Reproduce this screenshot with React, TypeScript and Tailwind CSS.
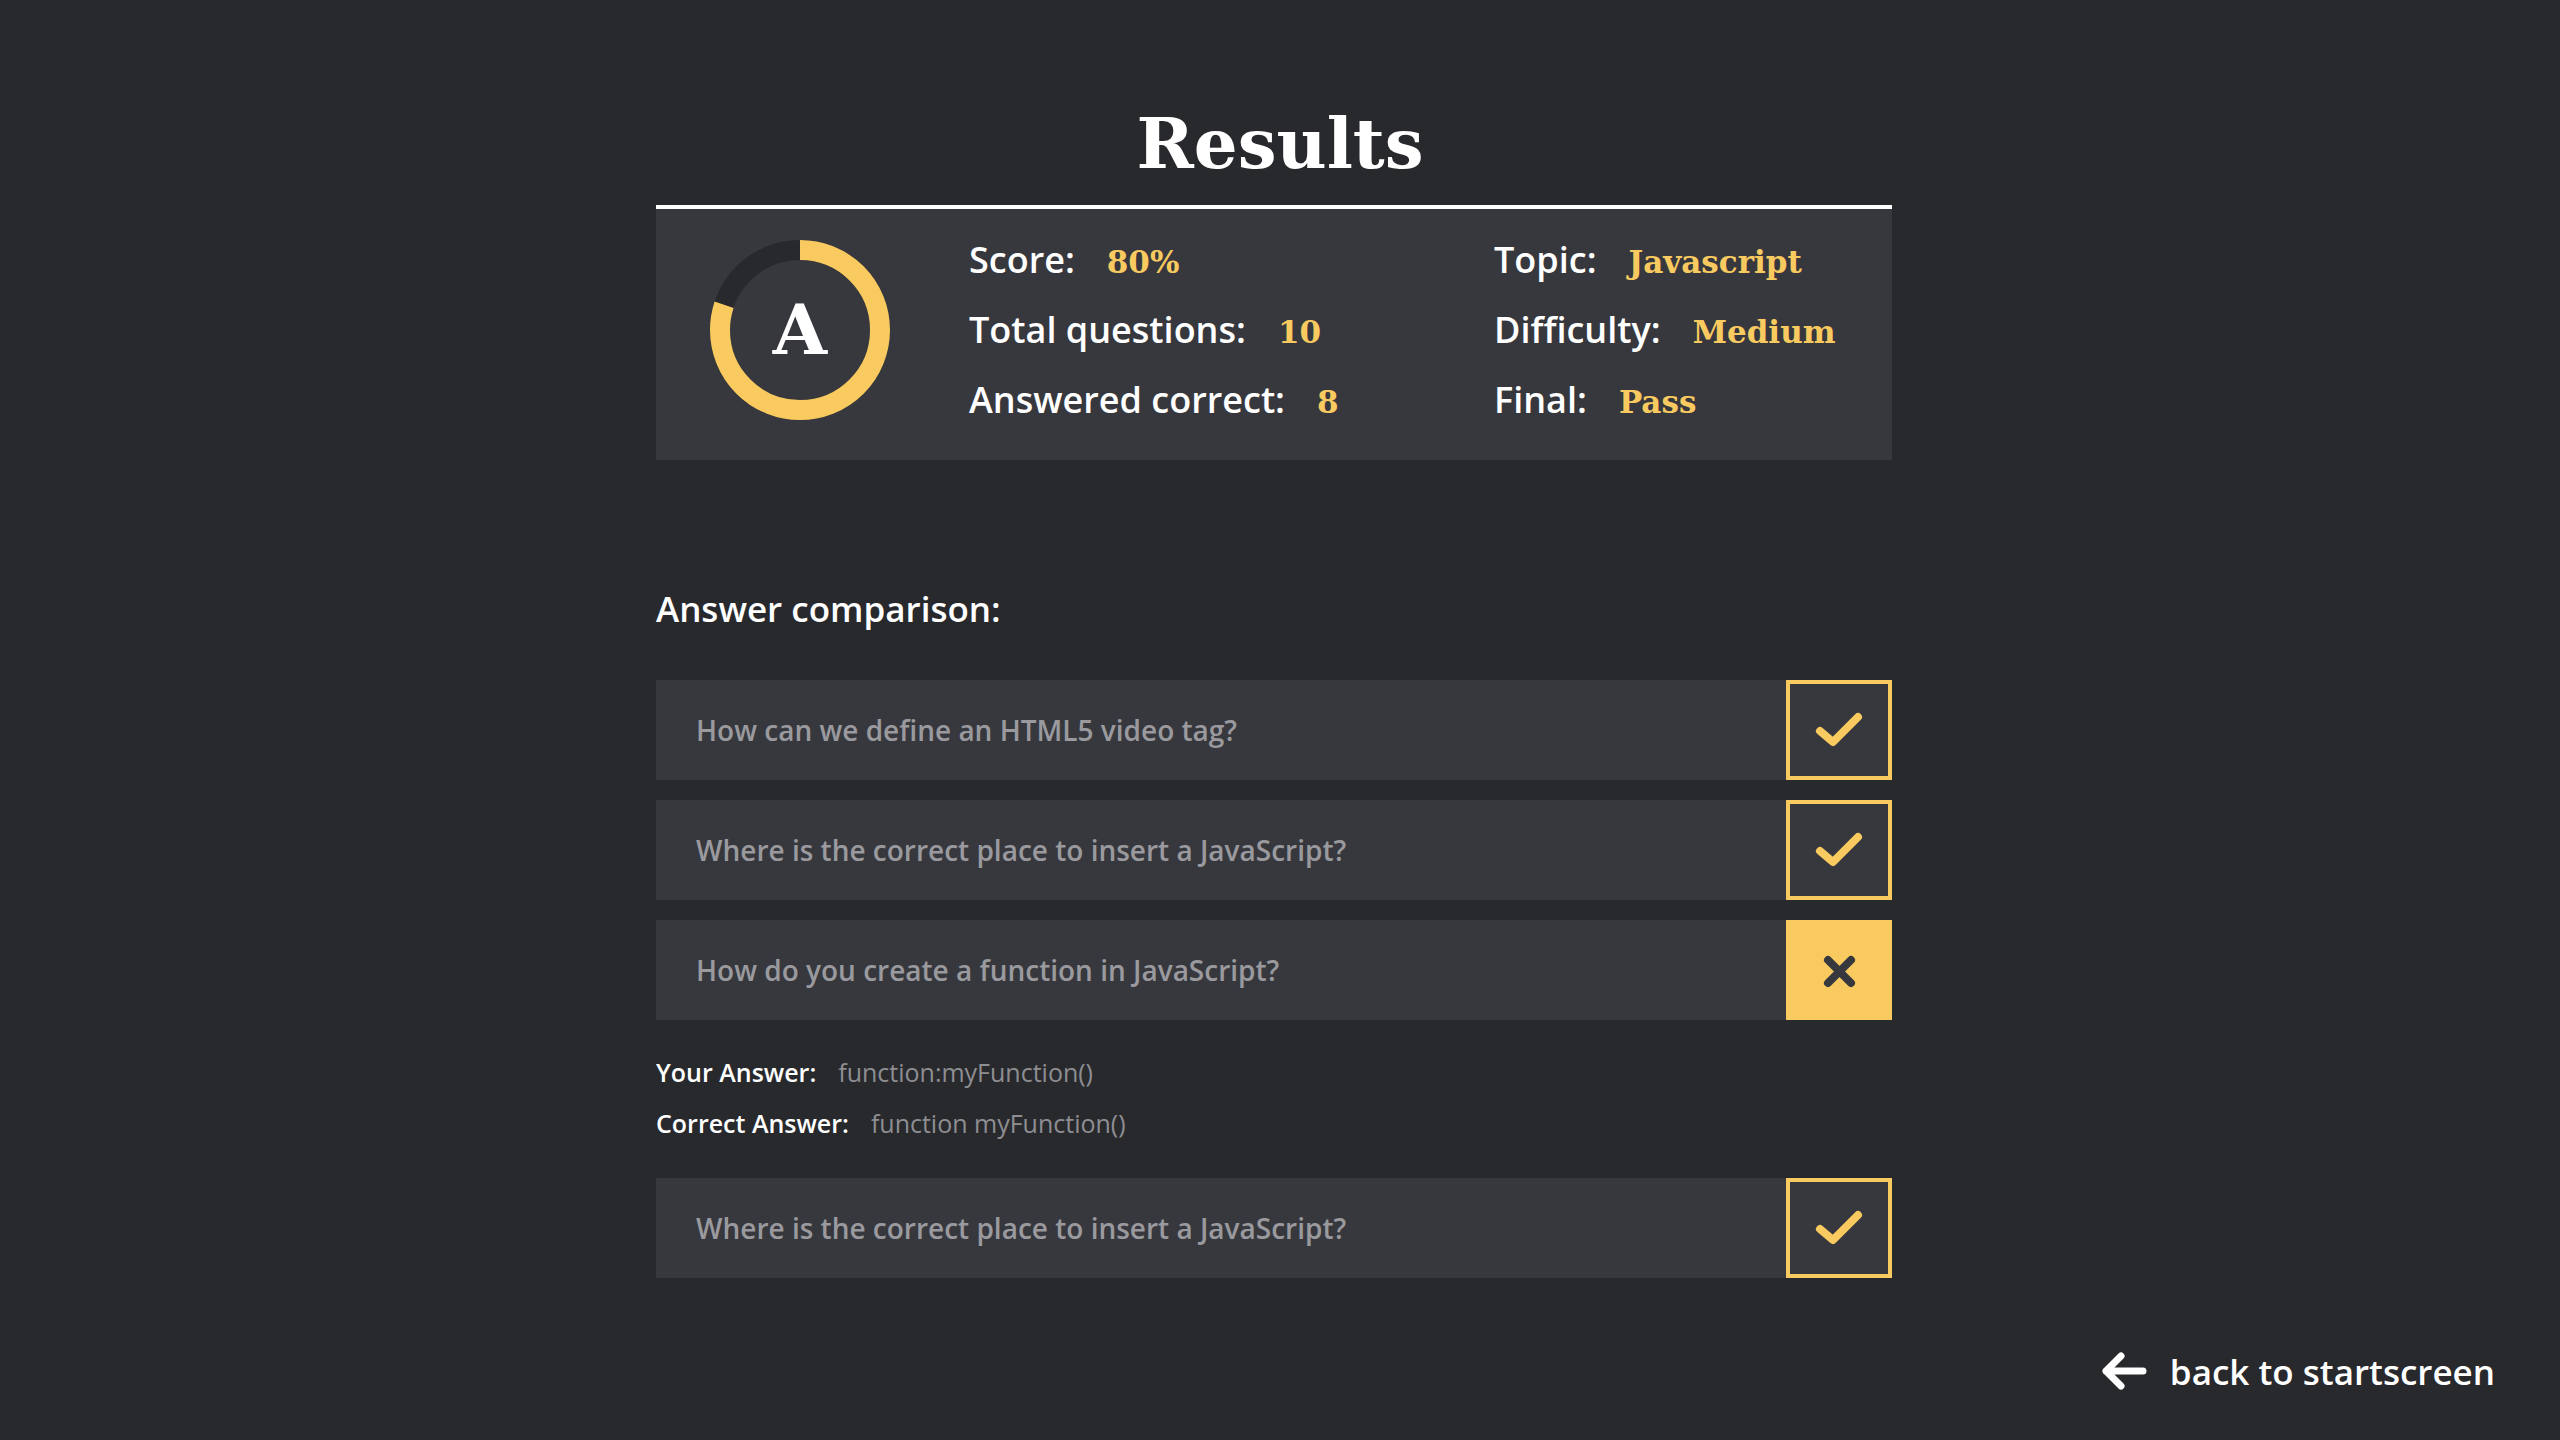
import React from 'react';

type Answer = {
  question: string;
  correct: boolean;
  yourAnswer?: string;
  rightAnswer?: string;
};

const answers: Answer[] = [
  { question: 'How can we define an HTML5 video tag?', correct: true },
  { question: 'Where is the correct place to insert a JavaScript?', correct: true },
  {
    question: 'How do you create a function in JavaScript?',
    correct: false,
    yourAnswer: 'function:myFunction()',
    rightAnswer: 'function myFunction()',
  },
  { question: 'Where is the correct place to insert a JavaScript?', correct: true },
];

const sans = { fontFamily: '"Open Sans", "Noto Sans", sans-serif' };
const serif = { fontFamily: '"DejaVu Serif", "Liberation Serif", serif' };

function ScoreRing({ percent, grade }: { percent: number; grade: string }) {
  const r = 80;
  const c = 2 * Math.PI * r;
  return (
    <div className="relative w-[180px] h-[180px] shrink-0">
      <svg width="180" height="180" viewBox="0 0 180 180" className="-rotate-90">
        <circle cx="90" cy="90" r={r} fill="none" stroke="#28292d" strokeWidth="20" />
        <circle
          cx="90"
          cy="90"
          r={r}
          fill="none"
          stroke="#f8ca5f"
          strokeWidth="20"
          strokeDasharray={`${(c * percent) / 100} ${c}`}
        />
      </svg>
      <div
        className="absolute inset-0 flex items-center justify-center text-white font-bold text-[70px] leading-none"
        style={serif}
      >
        {grade}
      </div>
    </div>
  );
}

function Stat({ label, value }: { label: string; value: string }) {
  return (
    <div className="flex items-baseline gap-[32px] h-[70px] leading-[70px]">
      <span className="text-white text-[36px] font-semibold" style={sans}>
        {label}
      </span>
      <span className="text-[#f8ca5f] text-[31px] font-bold" style={serif}>
        {value}
      </span>
    </div>
  );
}

function CheckIcon() {
  return (
    <svg width="98" height="92" viewBox="0 0 98 92" fill="none">
      <polyline
        points="30,47 43,58 68,33"
        stroke="#f8ca5f"
        strokeWidth="8"
        strokeLinecap="round"
        strokeLinejoin="round"
      />
    </svg>
  );
}

function CrossIcon() {
  return (
    <svg width="106" height="100" viewBox="0 0 106 100" fill="none">
      <path
        d="M42 40 L65 63 M65 40 L42 63"
        stroke="#37383e"
        strokeWidth="8"
        strokeLinecap="round"
      />
    </svg>
  );
}

function AnswerRow({ item }: { item: Answer }) {
  return (
    <div className="flex flex-col">
      <div className="flex h-[100px] bg-[#37383e]">
        <div
          className="flex-1 flex items-center pl-[40px] text-[28px] font-semibold text-[#9a9a9e]"
          style={sans}
        >
          {item.question}
        </div>
        {item.correct ? (
          <div className="w-[106px] h-[100px] border-4 border-[#f8ca5f] flex items-center justify-center">
            <CheckIcon />
          </div>
        ) : (
          <div className="w-[106px] h-[100px] bg-[#f8ca5f]">
            <CrossIcon />
          </div>
        )}
      </div>
      {!item.correct && (
        <div className="pt-[27px] pb-[9px] text-[25px] leading-[51px]" style={sans}>
          <div className="flex gap-[22px]">
            <span className="text-white font-semibold">Your Answer:</span>
            <span className="text-[#8e8e92] font-medium">{item.yourAnswer}</span>
          </div>
          <div className="flex gap-[22px]">
            <span className="text-white font-semibold">Correct Answer:</span>
            <span className="text-[#8e8e92] font-medium">{item.rightAnswer}</span>
          </div>
        </div>
      )}
    </div>
  );
}

export default function App() {
  return (
    <div className="min-h-screen w-full bg-[#28292d] flex flex-col">
      <div className="flex flex-col items-center pt-[109px]">
        <h1 className="text-white text-[69px] font-bold leading-[70px]" style={serif}>
          Results
        </h1>

        <div className="w-[1236px] mr-[12px] mt-[26px]">
          {/* Summary */}
          <div className="border-t-4 border-white bg-[#37383e] flex items-center pl-[54px] pt-[16px] pb-[25px]">
            <ScoreRing percent={80} grade="A" />
            <div className="ml-[79px] w-[525px] flex flex-col">
              <Stat label="Score:" value="80%" />
              <Stat label="Total questions:" value="10" />
              <Stat label="Answered correct:" value="8" />
            </div>
            <div className="flex flex-col">
              <Stat label="Topic:" value="Javascript" />
              <Stat label="Difficulty:" value="Medium" />
              <Stat label="Final:" value="Pass" />
            </div>
          </div>

          {/* Comparison */}
          <h2
            className="mt-[125px] text-white text-[35px] font-semibold leading-[48px]"
            style={sans}
          >
            Answer comparison:
          </h2>
          <div className="mt-[47px] flex flex-col gap-[20px]">
            {answers.map((a, i) => (
              <AnswerRow key={i} item={a} />
            ))}
          </div>
        </div>
      </div>

      <div className="mt-auto flex justify-end pr-[65px] pb-[49px]">
        <button className="flex items-center gap-[23px] text-white" style={sans}>
          <svg width="48" height="40" viewBox="0 0 48 40" fill="none">
            <path
              d="M44 20 H7 M22 5 L7 20 L22 35"
              stroke="#ffffff"
              strokeWidth="7"
              strokeLinecap="round"
              strokeLinejoin="round"
            />
          </svg>
          <span className="text-[35px] font-semibold leading-none">back to startscreen</span>
        </button>
      </div>
    </div>
  );
}
